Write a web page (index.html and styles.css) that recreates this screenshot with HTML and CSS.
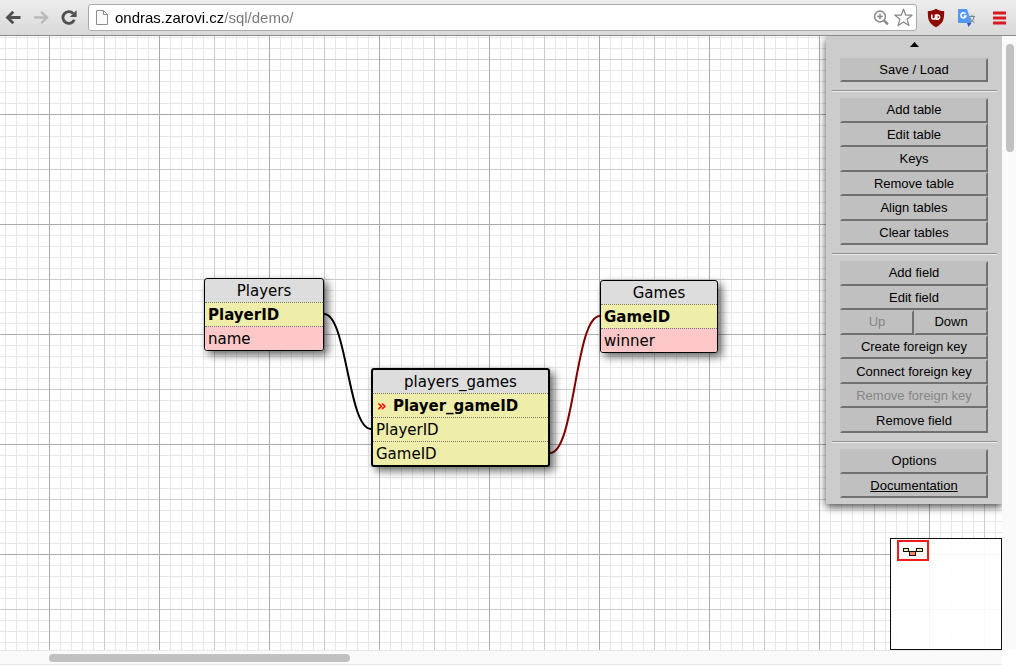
FILE: index.html
```html
<!DOCTYPE html>
<html lang="en">
<head>
<meta charset="utf-8">
<title>SQL Designer</title>
<link rel="stylesheet" href="styles.css">
</head>
<body>
<div class="browser">
  <header class="toolbar">
    <nav class="nav">
      <button class="icon-button" aria-label="Back">
        <svg width="16" height="16" viewBox="0 0 16 16"><path d="M15.500 7.500H3M8.300 1.800L2.500 7.500l5.800 5.700" fill="none" stroke="#505050" stroke-width="2.800"/></svg>
      </button>
      <button class="icon-button" aria-label="Forward" disabled>
        <svg width="16" height="16" viewBox="0 0 16 16"><path d="M1 7.500h12.500M8.200 1.800l5.800 5.700-5.800 5.700" fill="none" stroke="#b9b9b9" stroke-width="2.400"/></svg>
      </button>
      <button class="icon-button" aria-label="Reload">
        <svg width="16" height="16" viewBox="0 0 16 16"><path d="M13.300 9.700A5.900 5.900 0 1 1 12.200 3.500" fill="none" stroke="#505050" stroke-width="2.800"/><path d="M15.600 .2v6.800H8.800z" fill="#505050"/></svg>
      </button>
    </nav>
    <div class="address">
      <svg class="page-icon" width="12" height="15" viewBox="0 0 12 15"><path d="M.5.5h7l4 4v10H.5z" fill="#fafafa" stroke="#8c8c8c"/><path d="M7.5.5v4h4" fill="none" stroke="#8c8c8c"/></svg>
      <input class="url" type="text" aria-label="Address" value="ondras.zarovi.cz/sql/demo/">
      <button class="icon-button" aria-label="Zoom">
        <svg width="16" height="16" viewBox="0 0 16 16"><circle cx="7" cy="6.500" r="5.400" fill="none" stroke="#868686" stroke-width="1.500"/><path d="M4.200 6.500h5.600M7 3.700v5.600" stroke="#868686" stroke-width="1.500"/><path d="M11 10.500l3.800 3.800" stroke="#868686" stroke-width="2.400"/></svg>
      </button>
      <button class="icon-button" aria-label="Bookmark">
        <svg width="19" height="19" viewBox="0 0 19 19"><path d="M9.500 1.200l2.300 6h6.200l-4.900 4 1.800 6.400-5.400-3.700-5.400 3.700 1.800-6.400L1 7.200h6.200z" fill="#fff" stroke="#858585" stroke-width="1.200" stroke-linejoin="round"/></svg>
      </button>
    </div>
    <div class="extensions">
      <button class="icon-button" aria-label="uBlock">
        <svg width="18" height="20" viewBox="0 0 18 20"><path d="M9 .8c2.500 1.600 5 2.300 8.200 2.300 0 8-.4 12.300-8.200 16.100C1.200 15.400.8 11.100.8 3.100 4 3.100 6.500 2.400 9 .8z" fill="#8e0a05"/><path d="M4.800 6.500v2.800a1.800 1.800 0 0 0 3.600 0V6.500" fill="none" stroke="#fff" stroke-width="1.500"/><path d="M8.400 11.200h2.600a2.100 2.100 0 0 0 0-4.100H9.800v3.500" fill="none" stroke="#fff" stroke-width="1.500"/></svg>
      </button>
      <button class="icon-button" aria-label="Translate">
        <svg width="18" height="20" viewBox="0 0 18 20"><path d="M7 5h10v11H9z" fill="#dedede"/><path d="M0 1h9l4.500 14H0z" fill="#5498f5"/><path d="M9 15h4.500l-3 4z" fill="#3757c4"/><path d="M7.600 5.800A2.600 2.600 0 1 0 8 8H5.600" fill="none" stroke="#fff" stroke-width="1.500"/><path d="M11 8.500h6M14 7v1.500M16 9c-.5 3-2 4.500-4 5.500M12 9.500c.5 2 2 4 4.500 5" fill="none" stroke="#6f8794"/></svg>
      </button>
      <button class="icon-button" aria-label="Menu">
        <svg width="13" height="14" viewBox="0 0 13 14"><path d="M0 2h13M0 7h13M0 12h13" stroke="#d71920" stroke-width="3"/></svg>
      </button>
    </div>
  </header>

  <main class="viewport">
    <section class="canvas">
      <svg class="relations" width="800" height="600" viewBox="0 0 800 600" aria-hidden="true">
        <path class="relation" d="M324 278C347 278 348 393 371 393"/>
        <path class="relation relation-red" d="M600 280C575 280 575 417 550 417"/>
      </svg>
      <article class="entity players">
        <h2 class="entity-name">Players</h2>
        <p class="field key primary">PlayerID</p>
        <p class="field">name</p>
      </article>
      <article class="entity games">
        <h2 class="entity-name">Games</h2>
        <p class="field key primary">GameID</p>
        <p class="field">winner</p>
      </article>
      <article class="entity players-games selected">
        <h2 class="entity-name">players_games</h2>
        <p class="field key primary"><span class="marker">»</span> Player_gameID</p>
        <p class="field key">PlayerID</p>
        <p class="field key">GameID</p>
      </article>

      <aside class="panel">
        <button class="panel-toggle" aria-label="Collapse"><svg width="9" height="5" viewBox="0 0 9 5"><path d="M4.500 0L9 5H0z"/></svg></button>
        <div class="group">
          <button class="action">Save / Load</button>
        </div>
        <hr class="rule">
        <div class="group group-tables">
          <button class="action">Add table</button>
          <button class="action">Edit table</button>
          <button class="action">Keys</button>
          <button class="action">Remove table</button>
          <button class="action">Align tables</button>
          <button class="action">Clear tables</button>
        </div>
        <hr class="rule">
        <div class="group group-fields">
          <button class="action">Add field</button>
          <button class="action">Edit field</button>
          <div class="pair">
            <button class="action" disabled>Up</button>
            <button class="action">Down</button>
          </div>
          <button class="action">Create foreign key</button>
          <button class="action">Connect foreign key</button>
          <button class="action" disabled>Remove foreign key</button>
          <button class="action">Remove field</button>
        </div>
        <hr class="rule">
        <div class="group group-help">
          <button class="action">Options</button>
          <a class="action doc-link" href="#">Documentation</a>
        </div>
      </aside>

      <div class="minimap">
        <svg width="110" height="110" viewBox="0 0 110 110" aria-hidden="true">
          <rect x="7" y="2" width="30" height="19" fill="none" stroke="#f21b1b" stroke-width="2"/>
          <g stroke="#111">
            <rect x="12.500" y="9.500" width="5" height="3" fill="#eeeeaa"/>
            <rect x="25.500" y="9.500" width="6" height="3" fill="#eeeeaa"/>
            <rect x="18.500" y="12.500" width="6" height="4" fill="#ff8a60"/>
          </g>
        </svg>
      </div>
    </section>
    <div class="track track-y"><div class="thumb thumb-y"></div></div>
    <div class="track track-x"><div class="thumb thumb-x"></div></div>
  </main>
</div>
</body>
</html>
```
FILE: styles.css
```css
* { box-sizing: border-box; }

body {
  margin: 0;
  background: #fff;
  font-family: "Liberation Sans", Arial, sans-serif;
}

.browser {
  display: flex;
  flex-direction: column;
  height: 100vh;
}

button { font-family: inherit; }

/* Browser toolbar */
.toolbar {
  display: flex;
  align-items: center;
  padding: 0 10px 0 5px;
  height: 36px;
  border-bottom: 1px solid #8a8a8a;
  background: linear-gradient(#ededed, #d9d9d9);
}

.nav {
  display: flex;
  gap: 12px;
  margin-right: 11px;
}

.icon-button {
  display: flex;
  padding: 0;
  border: 0;
  background: none;
}

.address {
  display: flex;
  flex: 1;
  align-items: center;
  gap: 5px;
  height: 27px;
  padding: 0 3px 0 7px;
  border: 1px solid #aaa;
  border-radius: 3px;
  background: #fff;
}

.url {
  flex: 1;
  min-width: 0;
  margin-left: 2px;
  padding: 0;
  border: 0;
  outline: 0;
  background: linear-gradient(to right, #000 108px, #777 108px) text;
  color: transparent;
  font: 15px "Liberation Sans", Arial, sans-serif;
}

.extensions {
  display: flex;
  align-items: center;
  gap: 13px;
  margin-left: 10px;
}

.extensions .icon-button:last-child { margin-left: 4px; }

/* Scrolled page */
.viewport {
  display: grid;
  flex: 1;
  grid-template: 1fr 15px / 1fr 14px;
  min-height: 0;
}

.canvas {
  position: relative;
  overflow: hidden;
  background-color: #fff;
  background-image:
    linear-gradient(to right, #aaa 1px, transparent 1px),
    linear-gradient(#aaa 1px, transparent 1px),
    linear-gradient(to right, #ccc 1px, transparent 1px),
    linear-gradient(#ccc 1px, transparent 1px),
    linear-gradient(to right, #e7e7e7 1px, transparent 1px),
    linear-gradient(#e7e7e7 1px, transparent 1px);
  background-position: 49px 78px, 49px 78px, 49px 23px, 49px 23px, 5px 1px, 5px 1px;
  background-size: 110px 110px, 110px 110px, 55px 55px, 55px 55px, 11px 11px, 11px 11px;
}

.relations {
  position: absolute;
  top: 0;
  left: 0;
}

.relation {
  fill: none;
  stroke: #000;
  stroke-width: 2;
}

.relation-red { stroke: #800000; }

.entity {
  position: absolute;
  border: 1px solid #000;
  border-radius: 3px;
  background: #ddd;
  box-shadow: 4px 4px 8px rgba(0, 0, 0, 0.6);
  font-family: "DejaVu Sans", sans-serif;
  font-size: 15px;
  line-height: 21px;
}

.selected { border-width: 2px; }

.players { left: 204px; top: 242px; width: 120px; }
.games { left: 600px; top: 244px; width: 118px; }
.players-games { left: 371px; top: 332px; width: 179px; }

.entity-name {
  margin: 0;
  padding-top: 2px;
  font-size: inherit;
  font-weight: 400;
  text-align: center;
}

.field {
  margin: 0;
  padding: 2px 3px 0;
  border-top: 1px dotted #777;
  background: #ffc8c8;
}

.field:last-child { border-radius: 0 0 2px 2px; }
.key { background: #eeeeaa; }
.primary { font-weight: 700; }

.marker {
  padding: 0 1px;
  color: #f00;
}

/* Command panel */
.panel {
  position: absolute;
  top: 0;
  right: 0;
  width: 176px;
  padding: 0 14px 6px;
  background: #ccc;
  box-shadow: 0 3px 8px rgba(0, 0, 0, 0.7);
}

.panel-toggle {
  display: flex;
  align-items: center;
  justify-content: center;
  width: 100%;
  height: 16px;
  margin-bottom: 6px;
  padding: 0;
  border: 0;
  background: none;
}

.group {
  display: grid;
  grid-auto-rows: 1fr;
}

.group-tables { min-height: 147px; }
.group-fields { min-height: 172px; }
.group-help { min-height: 49px; }

.pair {
  display: grid;
  grid-template-columns: 1fr 1fr;
}

.action {
  display: flex;
  align-items: center;
  justify-content: center;
  padding: 0;
  border: 2px solid;
  border-color: #c0c0c0 #707070 #707070 #c0c0c0;
  background: #c0c0c0;
  color: #000;
  font-size: 13px;
  line-height: 20px;
}

.action:disabled { color: #868686; }
.doc-link { text-decoration: underline; }

.rule {
  margin: 8px -9px 6px -8px;
  border: 0;
  border-top: 1px solid #8f8f8f;
  border-bottom: 1px solid #eee;
}

/* Overview map */
.minimap {
  position: absolute;
  right: 0;
  bottom: 0;
  border: 1px solid #111;
  background: rgba(255, 255, 255, 0.9);
}

.minimap svg { display: block; }

/* Scrollbars */
.track { background: #fafafa; }

.track-y { padding: 8px 2px 0 4px; }

.track-x {
  padding: 3px 0 0 49px;
  border-top: 1px solid #e7e7e7;
  border-bottom: 1px solid #e7e7e7;
}

.thumb {
  border-radius: 4px;
  background: #c1c1c1;
}

.thumb-y { height: 108px; }
.thumb-x { width: calc((100% - 50px) / 3); height: 8px; }
```
